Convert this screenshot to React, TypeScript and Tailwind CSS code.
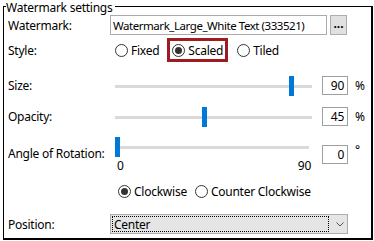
const ui = "font-['Noto_Sans',sans-serif] text-[12px] leading-[13px] tracking-[-0.25px] text-black";

function Radio({ label, checked }: { label: string; checked?: boolean }) {
  return (
    <div className="flex items-center gap-[3px]">
      <span className="w-[13px] h-[13px] rounded-full border border-[#333333] bg-white flex items-center justify-center">
        {checked && <span className="w-[7px] h-[7px] rounded-full bg-[#333333]" />}
      </span>
      <span>{label}</span>
    </div>
  );
}

function Slider({ value, max, width }: { value: number; max: number; width: number }) {
  const left = Math.round((value / max) * 193);
  return (
    <div className="relative h-[20px]" style={{ width }}>
      <div className="absolute left-0 right-0 top-[9px] h-[3px] bg-[#dadada]" />
      <div className="absolute top-0 w-[5px] h-[20px] bg-[#0078d7]" style={{ left }} />
    </div>
  );
}

function NumBox({ value }: { value: string }) {
  return (
    <div className="w-[26px] h-[19px] border border-[#a0a0a0] bg-white flex items-center justify-end pr-[3px]">
      {value}
    </div>
  );
}

export default function App() {
  return (
    <div className={`w-[374px] h-[241px] bg-white ${ui}`}>
      <div className="ml-[3px] w-[370px] flex flex-col">
        {/* group title */}
        <div className="flex h-[14px]">
          <div className="w-[3px] h-[8px] mt-[6px] border-t border-l border-black" />
          <span className="whitespace-nowrap pt-[1px]">Watermark settings</span>
          <div className="flex-1 h-[8px] mt-[6px] ml-[3px] border-t border-r-2 border-black" />
        </div>

        <div className="h-[226px] border-l border-r-2 border-b-2 border-black pl-[4px]">
          {/* watermark text */}
          <div className="flex items-center h-[20px] mt-[1px]">
            <span className="w-[102px]">Watermark:</span>
            <div className="w-[217px] h-[20px] border border-[#aaaaaa] flex items-center pl-[2px] whitespace-nowrap text-[11.5px] tracking-[-0.45px]">
              Watermark_Large_White Text (333521)
            </div>
            <div className="ml-[3px] w-[17px] h-[20px] bg-[#e1e1e1] border border-[#adadad] flex items-center justify-center font-bold leading-none pb-[2px] tracking-normal">
              ...
            </div>
          </div>

          {/* style */}
          <div className="flex items-center h-[24px] mt-[3px]">
            <span className="w-[102px]">Style:</span>
            <div className="ml-[5px]">
              <Radio label="Fixed" />
            </div>
            <div className="ml-[8px] h-[24px] border-[3px] border-[#9e1b22] flex items-center pl-[2px] pr-[2px]">
              <Radio label="Scaled" checked />
            </div>
            <div className="ml-[9px]">
              <Radio label="Tiled" />
            </div>
          </div>

          {/* size */}
          <div className="flex items-center h-[21px] mt-[13px]">
            <span className="w-[102px]">Size:</span>
            <div className="ml-[5px]">
              <Slider value={90} max={100} width={197} />
            </div>
            <div className="ml-[10px]">
              <NumBox value="90" />
            </div>
            <span className="ml-[7px]">%</span>
          </div>

          {/* opacity */}
          <div className="flex items-center h-[21px] mt-[10px]">
            <span className="w-[102px]">Opacity:</span>
            <div className="ml-[5px]">
              <Slider value={45} max={100} width={197} />
            </div>
            <div className="ml-[10px]">
              <NumBox value="45" />
            </div>
            <span className="ml-[7px]">%</span>
          </div>

          {/* angle */}
          <div className="flex items-start mt-[10px]">
            <span className="w-[102px] mt-[10px]">Angle of Rotation:</span>
            <div className="ml-[5px] w-[197px] flex flex-col">
              <Slider value={0} max={90} width={194} />
              <div className="flex justify-between w-[196px] mt-[2px] pl-[2px]">
                <span>0</span>
                <span>90</span>
              </div>
            </div>
            <div className="ml-[10px] mt-[8px]">
              <NumBox value="0" />
            </div>
            <span className="ml-[7px] mt-[6px]">°</span>
          </div>

          {/* direction */}
          <div className="flex items-center h-[16px] mt-[11px] pl-[110px]">
            <Radio label="Clockwise" checked />
            <div className="ml-[8px]">
              <Radio label="Counter Clockwise" />
            </div>
          </div>

          {/* position */}
          <div className="flex items-center h-[20px] mt-[15px]">
            <span className="w-[102px]">Position:</span>
            <div className="w-[238px] h-[20px] bg-[#e5e5e5] border border-[#adadad] flex items-center p-[1px]">
              <div className="w-[217px] h-full border border-dotted border-black flex items-center pl-[1px]">
                Center
              </div>
              <svg className="ml-[7px]" width="8" height="5" viewBox="0 0 8 5">
                <path d="M0.5 0.5 L4 4 L7.5 0.5" fill="none" stroke="#555555" strokeWidth="1" />
              </svg>
            </div>
          </div>
        </div>
      </div>
    </div>
  );
}
